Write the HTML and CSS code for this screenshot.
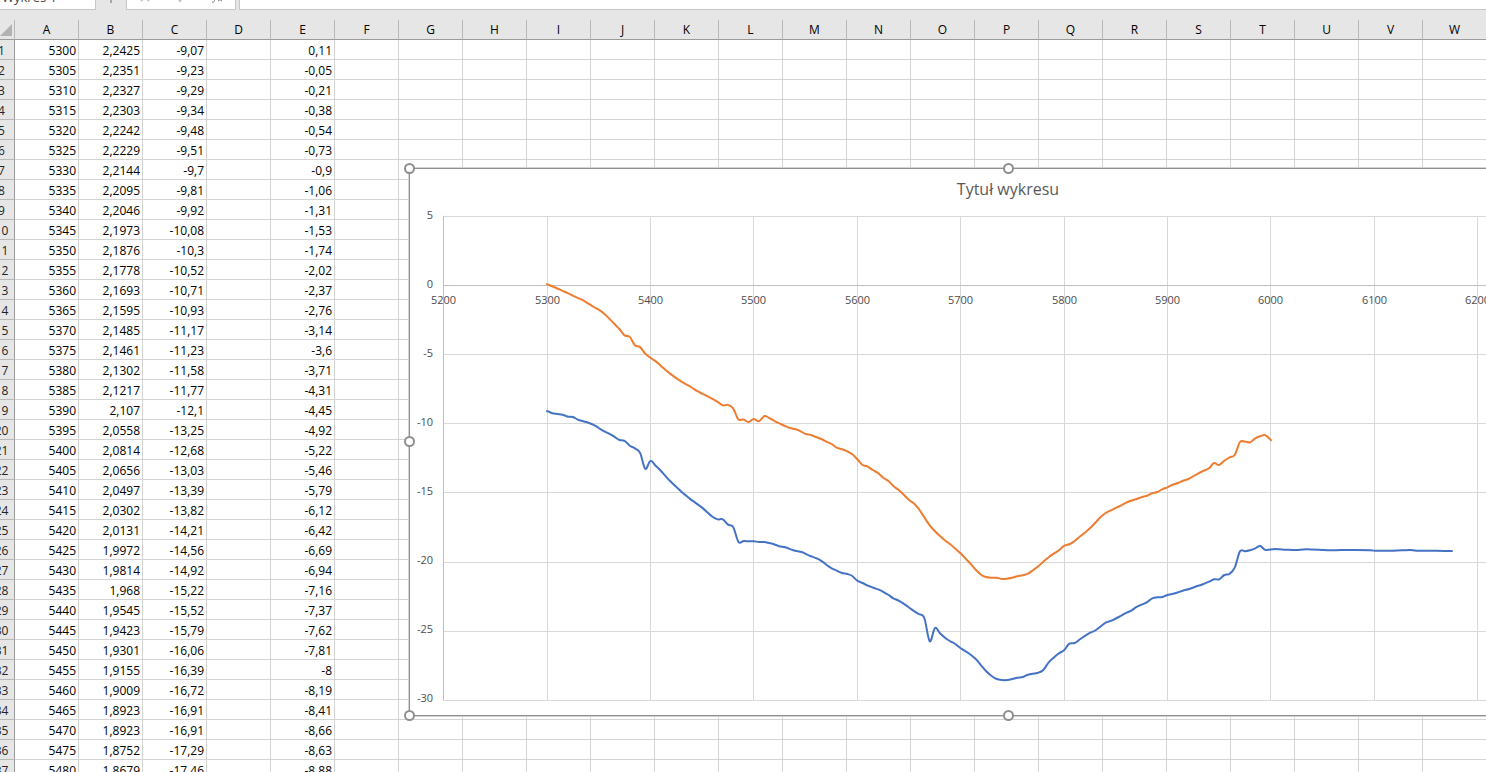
FILE: index.html
```html
<!DOCTYPE html>
<html lang="pl">
<head>
<meta charset="utf-8">
<title>Arkusz</title>
<link rel="stylesheet" href="styles.css">
</head>
<body>
<header class="formula-bar">
  <input class="name-box" type="text" value="Wykres 1" aria-label="Pole nazwy">
  <span class="grip" aria-hidden="true"></span>
  <div class="actions">
    <button type="button" class="action" aria-label="Anuluj">
      <svg class="icon" viewBox="0 0 12 12"><path d="M2 2l8 8M10 2l-8 8"/></svg>
    </button>
    <button type="button" class="action" aria-label="Wpis">
      <svg class="icon" viewBox="0 0 12 12"><path d="M2 6.5l3 3.5 5-8"/></svg>
    </button>
    <button type="button" class="action" aria-label="Wstaw funkcję">
      <svg class="icon icon-fx" viewBox="0 0 12 12"><path d="M7 1C5 .5 4.600 2 4.300 4L3.500 9.500C3.200 11.300 2 11.500 1 11M2.500 4.500h4M7.500 6.500c1.500 0 1.500 3.500 3.500 3.500M11 6.500c-1.500 0-2 3.500-4 3.500"/></svg>
    </button>
  </div>
  <input class="formula" type="text" aria-label="Pasek formuły">
</header>
<main class="sheet">
  <table class="grid">
    <colgroup id="cols"><col class="col-index"></colgroup>
    <thead><tr id="head"><th class="corner"><svg class="corner-mark" viewBox="0 0 12 12"><path d="M12 0V12H0z"/></svg></th></tr></thead>
    <tbody id="body"></tbody>
  </table>
  <section class="chart" aria-label="Tytuł wykresu">
    <svg class="plot" viewBox="409 168 1199 547">
      <g id="gridlines"></g>
      <g id="labels"></g>
      <path id="series-blue" class="series series-blue"/>
      <path id="series-orange" class="series series-orange"/>
      <text class="chart-title" x="1008" y="195">Tytuł wykresu</text>
    </svg>
    <span class="handle top left"></span>
    <span class="handle top center"></span>
    <span class="handle middle left"></span>
    <span class="handle bottom left"></span>
    <span class="handle bottom center"></span>
  </section>
</main>
<script src="app.js"></script>
</body>
</html>
```

FILE: styles.css
```css
* {
  box-sizing: border-box;
}

body {
  margin: 0;
  height: 100vh;
  overflow: hidden;
  display: flex;
  flex-direction: column;
  background: #fff;
  color: #000;
  font-family: "Open Sans", "Noto Sans", sans-serif;
  font-size: 12px;
}

/* Formula bar */
.formula-bar {
  flex: none;
  display: flex;
  align-items: flex-end;
  height: 20px;
  padding-bottom: 10px;
  background: #e6e6e6;
}

.name-box,
.actions,
.formula {
  flex: none;
  height: 26px;
  border: 1px solid #c6c6c6;
  background: #fff;
}

.name-box {
  width: 96px;
  border-left: 0;
  padding: 0 2px;
  font: inherit;
  font-size: 13px;
  color: #444;
}

.grip {
  width: 2px;
  height: 10px;
  margin: 0 14px;
  background: linear-gradient(#a6a6a6 3px, transparent 3px);
}

.actions {
  display: flex;
  align-items: center;
  justify-content: space-around;
  width: 110px;
  margin-right: 3px;
}

.action {
  display: flex;
  padding: 0;
  border: 0;
  background: none;
}

.icon {
  width: 12px;
  height: 12px;
  fill: none;
  stroke: #c6c6c6;
  stroke-width: 2;
}

.icon-fx {
  stroke: #777;
  stroke-width: 1;
}

.formula {
  flex: 1;
  border-right: 0;
  font: inherit;
}

/* Worksheet */
.sheet {
  position: relative;
  flex: 1;
  overflow: hidden;
}

.grid {
  width: 1498px;
  margin-left: -11px;
  table-layout: fixed;
  border-collapse: separate;
  border-spacing: 0;
}

.col-index {
  width: 26px;
}

.grid tr {
  height: 20px;
}

.grid th,
.grid td {
  height: 20px;
  padding: 2px 0 0;
  line-height: 17px;
  border-right: 1px solid #d4d4d4;
  border-bottom: 1px solid #d4d4d4;
}

.grid td {
  padding-right: 2px;
  text-align: right;
}

.grid th {
  background: #e6e6e6;
  font-weight: 400;
  text-align: center;
  color: #222;
}

.grid thead th {
  padding-top: 0;
  line-height: 19px;
  border-right-color: #b8b8b8;
  border-bottom-color: #9b9b9b;
  color: #000;
}

.grid tbody th {
  border-right-color: #9b9b9b;
  border-bottom-color: #b8b8b8;
}

.corner-mark {
  display: block;
  width: 12px;
  height: 12px;
  margin-left: 11px;
  fill: #b2b2b2;
}

/* Chart object */
.chart {
  position: absolute;
  left: 409px;
  top: 148px;
  width: 1199px;
  height: 548px;
  background: #fff;
  border: 1px solid #8f8f8f;
  box-shadow: 0 0 0 1px #d4d4d4;
}

.plot {
  display: block;
  width: 1199px;
  height: 547px;
  margin: -1px;
}

.gridline {
  stroke: #d9d9d9;
  shape-rendering: crispEdges;
}

.axis {
  stroke: #bfbfbf;
  shape-rendering: crispEdges;
}

.tick {
  font-size: 11px;
  fill: #4c4c4c;
  text-anchor: middle;
}

.tick-y {
  text-anchor: end;
}

.chart-title {
  font-size: 16px;
  fill: #595959;
  text-anchor: middle;
}

.series {
  fill: none;
  stroke-width: 2;
  stroke-linecap: round;
  stroke-linejoin: round;
}

.series-blue {
  stroke: #4472c4;
}

.series-orange {
  stroke: #ed7d31;
}

.handle {
  position: absolute;
  width: 11px;
  height: 11px;
  margin: -6px;
  border: 2px solid #8f8f8f;
  border-radius: 50%;
  background: #fff;
}

.top { top: 0; }
.middle { top: 50%; }
.bottom { top: 100%; margin-top: -5px; }
.left { left: 0; }
.center { left: 50%; }
```

FILE: app.js
```javascript
const colB = '2,2425 2,2351 2,2327 2,2303 2,2242 2,2229 2,2144 2,2095 2,2046 2,1973 2,1876 2,1778 2,1693 2,1595 2,1485 2,1461 2,1302 2,1217 2,107 2,0558 2,0814 2,0656 2,0497 2,0302 2,0131 1,9972 1,9814 1,968 1,9545 1,9423 1,9301 1,9155 1,9009 1,8923 1,8923 1,8752 1,8679'.split(' ');
const colC = '-9,07 -9,23 -9,29 -9,34 -9,48 -9,51 -9,7 -9,81 -9,92 -10,08 -10,3 -10,52 -10,71 -10,93 -11,17 -11,23 -11,58 -11,77 -12,1 -13,25 -12,68 -13,03 -13,39 -13,82 -14,21 -14,56 -14,92 -15,22 -15,52 -15,79 -16,06 -16,39 -16,72 -16,91 -16,91 -17,29 -17,46'.split(' ');
const colE = '0,11 -0,05 -0,21 -0,38 -0,54 -0,73 -0,9 -1,06 -1,31 -1,53 -1,74 -2,02 -2,37 -2,76 -3,14 -3,6 -3,71 -4,31 -4,45 -4,92 -5,22 -5,46 -5,79 -6,12 -6,42 -6,69 -6,94 -7,16 -7,37 -7,62 -7,81 -8 -8,19 -8,41 -8,66 -8,63 -8,88'.split(' ');

// Worksheet
const letters = 'ABCDEFGHIJKLMNOPQRSTUVW'.split('');
const cols = document.getElementById('cols');
const head = document.getElementById('head');
letters.forEach((letter) => {
  cols.appendChild(document.createElement('col'));
  const th = document.createElement('th');
  th.scope = 'col';
  th.textContent = letter;
  head.appendChild(th);
});
const body = document.getElementById('body');
colB.forEach((b, i) => {
  const tr = body.insertRow();
  const th = document.createElement('th');
  th.scope = 'row';
  th.textContent = i + 1;
  tr.appendChild(th);
  const row = { A: 5300 + i * 5, B: b, C: colC[i], E: colE[i] };
  letters.forEach((letter) => {
    tr.insertCell().textContent = row[letter] ?? '';
  });
});

// Chart scales
const sx = (v) => 443.6 + (v - 5200) * 1.0341;
const sy = (v) => 285.6 - v * 13.825;
const SVG = 'http://www.w3.org/2000/svg';
const add = (parent, name, attrs, text) => {
  const el = document.createElementNS(SVG, name);
  Object.entries(attrs).forEach(([k, v]) => el.setAttribute(k, v));
  if (text !== undefined) el.textContent = text;
  document.getElementById(parent).appendChild(el);
};
for (let v = 5; v >= -30; v -= 5) {
  const y = Math.floor(sy(v)) + 0.5;
  add('gridlines', 'line', { class: 'gridline', x1: 443, x2: 1600, y1: y, y2: y });
  add('labels', 'text', { class: 'tick tick-y', x: 433, y: 288 - v * 13.8 }, v);
}
for (let v = 5200; v <= 6200; v += 100) {
  const x = Math.floor(sx(v)) + 0.5;
  add('gridlines', 'line', { class: v === 5200 ? 'axis' : 'gridline', x1: x, x2: x, y1: 216, y2: 700 });
  add('labels', 'text', { class: 'tick', x, y: 304 }, v);
}
add('gridlines', 'line', { class: 'axis', x1: 443, x2: 1600, y1: 285.5, y2: 285.5 });

// Remaining samples of each series, in plot coordinates
const blueTail = '738.5,542 743.7,541 749,541.3 754,541.3 759,542 764.6,542 768,542.7 773.3,544 779.3,546.3 785.3,547.3 793.3,550.3 801.7,552 806.7,554.3 811,556.3 816.7,558.3 822,561.3 826.7,565 831.7,568.3 836.7,570.7 842,573 847.3,574 852.3,576 857.3,580.7 862.7,583 868,585.7 873.3,587.7 878.7,589.7 884,592.3 888.7,595 893.3,598.3 900,601.3 908,606.7 913.3,610.7 918.7,614 924.3,618 929.7,641.3 935,628 940,633.3 945.3,638 950.3,641.3 955.3,644 960.3,648 968.3,653 976,659.3 981,665.3 986,671 991.3,675.7 996.7,679 1002,680 1007.3,680 1012.3,679 1017.3,677.7 1022.7,677 1028,674.7 1038.3,672.7 1043.3,670 1048.7,662.3 1053.7,657.7 1059,653.3 1064.3,650 1069.3,643.7 1074.7,643 1080,639.3 1085.3,635.7 1090.3,632.7 1096,630 1105.7,622.7 1111.3,620.7 1126.7,612.7 1131.7,610.3 1137,606.7 1146.7,602.3 1152.3,598.3 1157.3,597.3 1162.3,597 1167.3,595 1175,593.3 1182.7,590.7 1189.3,589 1195.3,586.7 1201.7,584.7 1209,581.7 1214,579.3 1219.3,579.3 1224.3,575 1229.7,573.7 1234.7,567.7 1240,551.3 1245,551.3 1250,550.3 1255.3,548.3 1260.3,546 1265.7,550 1275,549 1286.7,549.7 1296.7,550 1306.7,549.3 1330,550.3 1341.7,550 1370,550.3 1375,550.7 1393.3,550.7 1410,550 1416.7,550.7 1436,550.7 1452,551';
const orangeTail = '738.3,419.3 743.5,419.5 748.5,422 753.7,419 759,421.3 764.6,416 770,418.5 775,421.3 780,423.7 785,426 790,428 795.7,429.3 800.7,431.3 805.7,434 811,435 816,437 821.3,439 826.3,441.7 831.7,444 836.7,447.7 842,449.3 847.3,451.3 852.3,454.3 857.3,459.3 862.3,464.7 867.3,466.3 872.7,470 878,473 883.3,477.7 888.7,481.3 893.7,486.3 899,490.3 904,495 909,500 914.3,503.7 919.3,509.7 924.3,517.3 929.7,525.3 935,531.3 940,536 945.3,540.7 950.3,544.3 955.7,549 960.5,553.3 965.7,558.7 970.7,564 976,570 981,574.7 986,577 991.3,577.7 996.7,577.7 1002,579 1006.7,578.7 1012,577.7 1017.3,576.3 1022.7,575.3 1028,573.7 1033.3,570 1038.3,566.3 1043.3,561.7 1048.7,557.3 1053.7,553.7 1059,550.3 1064.3,545.7 1070,544 1075,540.7 1080.3,536.3 1085.7,532 1091,527.3 1096,522 1100.7,517 1105.7,513 1111,510.3 1116.3,507.7 1121.3,505.3 1130,501 1136.7,499 1142,497 1147,495.7 1152,493.3 1157.3,492 1162.3,489.3 1167.3,487.3 1172.7,484.7 1178,483 1183,480.7 1188.3,479 1193.3,476.3 1198.3,473.3 1203.7,470.7 1209,468.3 1214,463 1219,465 1224.3,460.7 1229.7,457.3 1234.7,455 1240,442 1245,441.7 1250.3,442.3 1255.3,438.3 1260.7,436 1265.7,435.3 1271,440.3';

const series = (column, tail) => column
  .map((t, i) => [sx(5300 + i * 5), sy(Number(t.replace(',', '.')))])
  .concat(tail.split(' ').map((p) => p.split(',').map(Number)));

// Smooth curve through every sample (Catmull-Rom as cubic Béziers)
const smooth = (p) => {
  let d = `M${p[0]}`;
  for (let i = 0; i < p.length - 1; i += 1) {
    const a = p[i - 1] || p[i];
    const b = p[i];
    const c = p[i + 1];
    const e = p[i + 2] || c;
    d += `C${b[0] + (c[0] - a[0]) / 6},${b[1] + (c[1] - a[1]) / 6} ${c[0] - (e[0] - b[0]) / 6},${c[1] - (e[1] - b[1]) / 6} ${c[0]},${c[1]}`;
  }
  return d;
};
document.getElementById('series-blue').setAttribute('d', smooth(series(colC, blueTail)));
document.getElementById('series-orange').setAttribute('d', smooth(series(colE, orangeTail)));
```
